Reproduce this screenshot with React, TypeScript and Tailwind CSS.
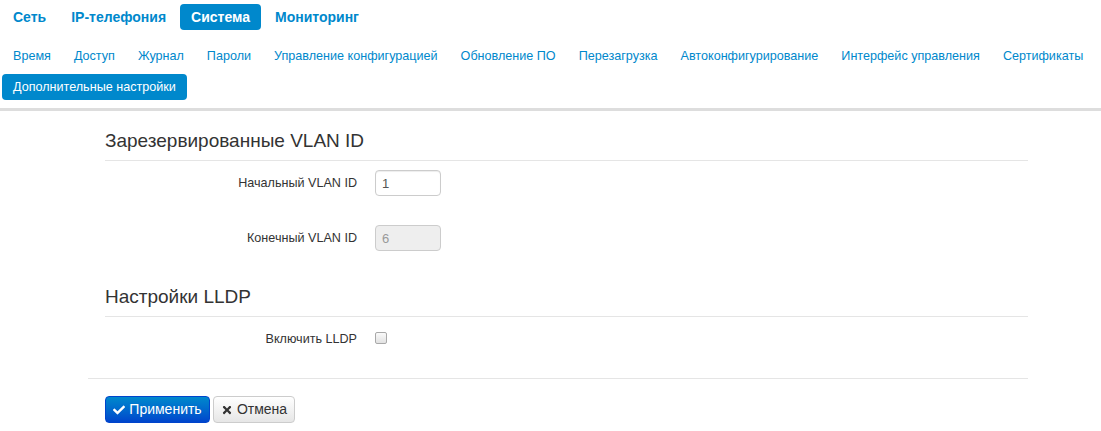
import { FaCheck, FaTimes } from "react-icons/fa";

const topMenu = ["Сеть", "IP-телефония", "Система", "Мониторинг"];
const subMenu = [
  "Время",
  "Доступ",
  "Журнал",
  "Пароли",
  "Управление конфигурацией",
  "Обновление ПО",
  "Перезагрузка",
  "Автоконфигурирование",
  "Интерфейс управления",
  "Сертификаты",
  "Дополнительные настройки",
];

function Legend({ children, className = "" }: { children: React.ReactNode; className?: string }) {
  return (
    <div className={`border-b border-[#e5e5e5] pb-[8px] text-[19px] leading-[22px] text-[#333] ${className}`}>
      {children}
    </div>
  );
}

function Row({ label, children, className = "" }: { label: string; children: React.ReactNode; className?: string }) {
  return (
    <div className={`flex h-[26px] items-center ${className}`}>
      <label className="w-[252px] text-right text-[12.6px] text-[#333]">{label}</label>
      <div className="ml-[18px] flex items-center">{children}</div>
    </div>
  );
}

export default function App() {
  return (
    <div className="min-h-[431px] bg-white font-['Liberation_Sans',Arial,sans-serif]">
      {/* main menu */}
      <div className="flex gap-[3px] px-[2px] pt-[4px]">
        {topMenu.map((m) => (
          <span
            key={m}
            className={`flex h-[26px] items-center rounded-[4px] px-[11px] text-[14px] font-bold ${
              m === "Система" ? "bg-[#0088cc] text-white" : "text-[#0088cc]"
            }`}
          >
            {m}
          </span>
        ))}
      </div>

      {/* submenu */}
      <div className="mt-[13px] flex flex-wrap gap-x-[1px] gap-y-[5px] px-[2px]">
        {subMenu.map((m) => (
          <span
            key={m}
            className={`flex h-[26px] items-center rounded-[4px] px-[11px] text-[12.6px] ${
              m === "Дополнительные настройки" ? "bg-[#0088cc] text-white" : "text-[#0088cc]"
            }`}
          >
            {m}
          </span>
        ))}
      </div>

      <div className="mt-[8px] h-[3px] bg-[#dddddd]" />

      <div className="w-[1028px] pl-[88px]">
        <div className="pl-[17px]">
          <Legend className="mt-[19px]">Зарезервированные VLAN ID</Legend>
          <Row label="Начальный VLAN ID" className="mt-[9px]">
            <input
              defaultValue="1"
              className="h-[26px] w-[66px] rounded-[4px] border border-[#cccccc] px-[6px] text-[13px] text-[#555] shadow-[inset_0_1px_1px_rgba(0,0,0,0.075)] outline-none"
            />
          </Row>
          <Row label="Конечный VLAN ID" className="mt-[29px]">
            <input
              defaultValue="6"
              disabled
              className="h-[26px] w-[66px] rounded-[4px] border border-[#cccccc] bg-[#eeeeee] px-[6px] text-[13px] text-[#999]"
            />
          </Row>

          <Legend className="mt-[35px] pb-[6px]">Настройки LLDP</Legend>
          <Row label="Включить LLDP" className="mt-[9px]">
            <span className="-mt-[2px] h-[12px] w-[12px] rounded-[2px] border border-[#a9a9a9] bg-gradient-to-b from-[#fafafa] to-[#e2e2e2]" />
          </Row>
        </div>

        {/* actions */}
        <div className="mt-[26px] flex gap-[3px] border-t border-[#e5e5e5] pl-[17px] pt-[17px]">
          <button className="flex h-[27px] w-[105px] items-center justify-center gap-[4px] rounded-[4px] border border-[#0044cc] bg-gradient-to-b from-[#0088cc] to-[#0044cc] text-[14px] text-white">
            <FaCheck size={12} />
            Применить
          </button>
          <button className="flex h-[27px] w-[82px] items-center justify-center gap-[4px] rounded-[4px] border border-[#cccccc] bg-gradient-to-b from-white to-[#e6e6e6] text-[14px] text-[#333]">
            <FaTimes size={12} />
            Отмена
          </button>
        </div>
      </div>
    </div>
  );
}
